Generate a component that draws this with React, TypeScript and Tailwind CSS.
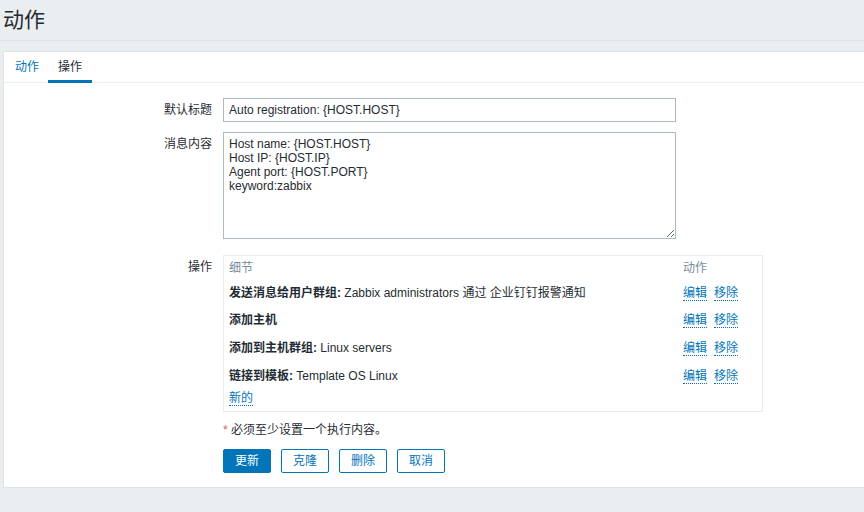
import React from "react";

const font = {
  fontFamily:
    '"Liberation Sans", Arial, "Noto Sans CJK SC", sans-serif',
};

function Link({ children }: { children: React.ReactNode }) {
  return (
    <span className="inline-block leading-[14px] text-[#0275b8] border-b border-dotted border-[#0275b8]">
      {children}
    </span>
  );
}

const rows: { bold: string; rest: string; h: string }[] = [
  { bold: "发送消息给用户群组:", rest: " Zabbix administrators 通过 企业钉钉报警通知", h: "h-[26px]" },
  { bold: "添加主机", rest: "", h: "h-[28px]" },
  { bold: "添加到主机群组:", rest: " Linux servers", h: "h-[28px]" },
  { bold: "链接到模板:", rest: " Template OS Linux", h: "h-[28px]" },
];

export default function App() {
  return (
    <div
      className="w-[864px] h-[512px] bg-[#ebeef0] overflow-hidden text-[12px] leading-[14px] text-[#1f2c33]"
      style={font}
    >
      <div className="h-[41px] border-b border-[#dfe4e7] flex items-center pl-[3px]">
        <h1 className="text-[21px] leading-[24px] font-normal -mt-[1px]">动作</h1>
      </div>
      <div className="mt-[10px] ml-[3px] w-[880px] h-[437px] bg-white border border-[#dfe4e7]">
        {/* tabs */}
        <div className="flex h-[31px] border-b border-[#ebeef0]">
          <div className="pl-[11px] pr-[9px] flex items-center text-[#0275b8]">动作</div>
          <div className="px-[10px] flex items-center border-b-[3px] border-[#0275b8] -mb-[1px] pt-[2px]">
            操作
          </div>
        </div>

        <div className="pt-[15px] flex flex-col">
          {/* 默认标题 */}
          <div className="flex items-center">
            <div className="w-[209px] text-right pr-[1px]">默认标题</div>
            <input
              className="ml-[10px] w-[453px] h-[24px] border border-[#acbbc2] px-[5px] text-[12px] outline-none text-[#1f2c33]"
              style={font}
              defaultValue="Auto registration: {HOST.HOST}"
            />
          </div>
          {/* 消息内容 */}
          <div className="flex items-start mt-[10px]">
            <div className="w-[209px] text-right pr-[1px] pt-[5px]">消息内容</div>
            <textarea
              className="ml-[10px] w-[453px] h-[107px] border border-[#acbbc2] px-[5px] py-[4px] text-[12px] leading-[14px] outline-none text-[#1f2c33]"
              style={font}
              defaultValue={
                "Host name: {HOST.HOST}\nHost IP: {HOST.IP}\nAgent port: {HOST.PORT}\nkeyword:zabbix"
              }
            />
          </div>
          {/* 操作 */}
          <div className="flex items-start mt-[16px]">
            <div className="w-[209px] text-right pr-[1px] pt-[5px]">操作</div>
            <div className="ml-[10px] w-[540px] h-[157px] border border-[#ebeef0] px-[5px]">
              <div className="flex items-center h-[24px] text-[#768d99]">
                <div className="w-[454px]">细节</div>
                <div>动作</div>
              </div>
              {rows.map((r, i) => (
                <div key={i} className={"flex items-center " + r.h}>
                  <div className="w-[454px] whitespace-nowrap">
                    <span className="font-bold">{r.bold}</span>
                    {r.rest}
                  </div>
                  <div className="flex gap-[7px]">
                    <Link>编辑</Link>
                    <Link>移除</Link>
                  </div>
                </div>
              ))}
              <div className="flex items-center h-[16px]">
                <Link>新的</Link>
              </div>
            </div>
          </div>
          {/* required note */}
          <div className="ml-[219px] mt-[11px] h-[14px]">
            <span className="text-[#e45959]">*</span> 必须至少设置一个执行内容。
          </div>
          {/* buttons */}
          <div className="ml-[219px] mt-[12px] flex gap-[10px]">
            <button className="w-[48px] h-[24px] rounded-[2px] bg-[#0275b8] border border-[#0275b8] text-white text-[12px]" style={font}>
              更新
            </button>
            <button className="w-[48px] h-[24px] rounded-[2px] bg-white border border-[#0275b8] text-[#0275b8] text-[12px]" style={font}>
              克隆
            </button>
            <button className="w-[48px] h-[24px] rounded-[2px] bg-white border border-[#0275b8] text-[#0275b8] text-[12px]" style={font}>
              删除
            </button>
            <button className="w-[48px] h-[24px] rounded-[2px] bg-white border border-[#0275b8] text-[#0275b8] text-[12px]" style={font}>
              取消
            </button>
          </div>
        </div>
      </div>
    </div>
  );
}
